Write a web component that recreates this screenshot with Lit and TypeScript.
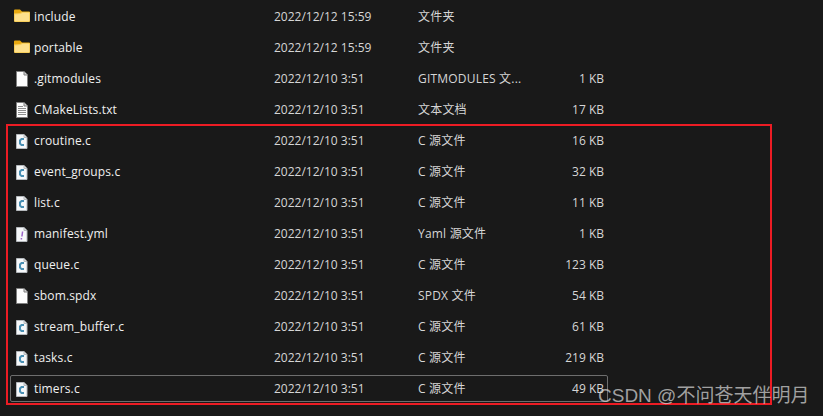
import { LitElement, html, css, svg } from "lit";
import { customElement } from "lit/decorators.js";

type Kind = "folder" | "blank" | "text" | "c" | "yaml";
const rows: [Kind, string, string, string, string][] = [
  ["folder", "include", "2022/12/12 15:59", "文件夹", ""],
  ["folder", "portable", "2022/12/12 15:59", "文件夹", ""],
  ["blank", ".gitmodules", "2022/12/10 3:51", "GITMODULES 文...", "1 KB"],
  ["text", "CMakeLists.txt", "2022/12/10 3:51", "文本文档", "17 KB"],
  ["c", "croutine.c", "2022/12/10 3:51", "C 源文件", "16 KB"],
  ["c", "event_groups.c", "2022/12/10 3:51", "C 源文件", "32 KB"],
  ["c", "list.c", "2022/12/10 3:51", "C 源文件", "11 KB"],
  ["yaml", "manifest.yml", "2022/12/10 3:51", "Yaml 源文件", "1 KB"],
  ["c", "queue.c", "2022/12/10 3:51", "C 源文件", "123 KB"],
  ["blank", "sbom.spdx", "2022/12/10 3:51", "SPDX 文件", "54 KB"],
  ["c", "stream_buffer.c", "2022/12/10 3:51", "C 源文件", "61 KB"],
  ["c", "tasks.c", "2022/12/10 3:51", "C 源文件", "219 KB"],
  ["c", "timers.c", "2022/12/10 3:51", "C 源文件", "49 KB"],
];

const sheet = (inner = svg``) => svg`
  <path d="M2.5.5H10L13.5 4V15.5H2.5Z" fill="#fdfdfd" stroke="#7f7f7f"/>
  <path d="M10 .5V4H13.5" fill="#d8d8d8" stroke="#7f7f7f"/>${inner}`;

const codeSheet = (inner = svg``) => svg`
  <path d="M2.5 1.5H10L13 4.5V15.5H2.5Z" fill="#f6f8fa" stroke="#b4b8bc"/>
  <path d="M10 1.5V4.5H13" fill="#dcdcdc" stroke="#b4b8bc"/>${inner}`;

const icons: Record<Kind, unknown> = {
  folder: svg`
    <path d="M0 2.5A1 1 0 0 1 1 1.5H6L8 3.5H15A1 1 0 0 1 16 4.5V6H0Z" fill="#e9a90f"/>
    <path d="M0 5.5L6 5L8 4H15A1 1 0 0 1 16 5V13A1 1 0 0 1 15 14H1A1 1 0 0 1 0 13Z" fill="#f8cf5c"/>
    <path d="M1 6.5L6.5 6L8.5 5H15V13H1Z" fill="#fee08c"/>`,
  blank: sheet(),
  text: sheet(svg`<path d="M4 4.5H9M4 6.5H12M4 8.5H12M4 10.5H12M4 12.5H12" stroke="#8f8f8f" fill="none"/>`),
  c: codeSheet(svg`<path d="M10 6H7.5L6 7.5V10.5L7.5 12H10" stroke="#4a90b4" stroke-width="2" fill="none"/>`),
  yaml: codeSheet(svg`<path d="M8.6 5.5L7.9 10.5M7.4 12V13.5" stroke="#9a63c8" stroke-width="1.5" fill="none"/>`),
};

@customElement("app-root")
export class AppRoot extends LitElement {
  static styles = css`
    :host {
      display: block;
      position: relative;
      width: 823px;
      height: 416px;
      overflow: hidden;
      background: #191919;
      color: #f0f0f0;
      font-family: "Open Sans", "Noto Sans CJK SC", sans-serif;
      font-size: 12px;
    }
    .list {
      padding-top: 1px;
    }
    .row {
      display: grid;
      grid-template-columns: 14px 16px 4px 240px 144px 132px 54px;
      align-items: center;
      height: 31px;
      white-space: nowrap;
    }
    .icon {
      grid-column: 2;
      width: 16px;
      height: 16px;
    }
    .folder-icon {
      margin-bottom: 2px;
    }
    .name {
      grid-column: 4;
      letter-spacing: 0.14px;
    }
    .date,
    .type,
    .size {
      color: #d6d6d6;
    }
    .type {
      letter-spacing: 0.2px;
      margin-bottom: 2px;
    }
    .size {
      text-align: right;
    }
    .focus {
      position: absolute;
      left: 10px;
      top: 375px;
      width: 596px;
      height: 25px;
      border: 1px solid #6e6e6e;
      border-radius: 2px;
    }
    .mark {
      position: absolute;
      left: 6px;
      top: 124px;
      width: 762px;
      height: 277px;
      border: 2px solid #ec1c24;
    }
    .watermark {
      position: absolute;
      left: 598px;
      top: 382px;
      font-family: "Liberation Sans", "Noto Sans CJK SC", sans-serif;
      font-size: 19px;
      line-height: 28px;
      color: rgba(215, 215, 215, 0.72);
      white-space: nowrap;
    }
  `;

  render() {
    return html`
      <div class="list">
        ${rows.map(
          ([kind, name, date, type, size]) => html`
            <div class="row">
              <svg class="icon ${kind === "folder" ? "folder-icon" : ""}" viewBox="0 0 16 16">${icons[kind]}</svg>
              <span class="name">${name}</span>
              <span class="date">${date}</span>
              <span class="type">${type}</span>
              <span class="size">${size}</span>
            </div>
          `
        )}
      </div>
      <div class="focus"></div>
      <div class="mark"></div>
      <div class="watermark">CSDN @不问苍天伴明月</div>
    `;
  }
}
